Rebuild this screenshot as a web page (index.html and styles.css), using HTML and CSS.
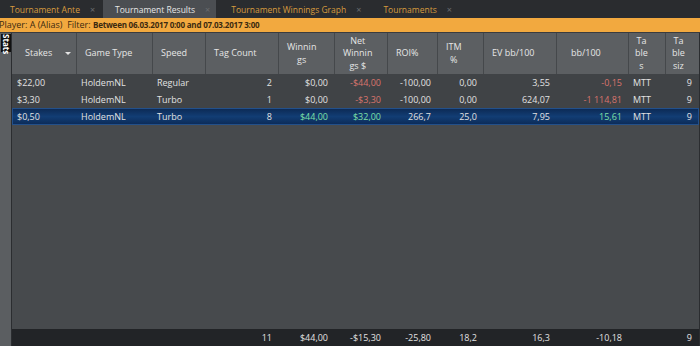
FILE: index.html
```html
<!DOCTYPE html>
<html lang="en">

<head>
    <meta charset="UTF-8">
    <title>Tournament Results</title>
    <link rel="stylesheet" href="styles.css">
</head>

<body>
    <div class="tabs">
        <div class="tab">Tournament Ante <span class="close">×</span></div>
        <div class="tab active">Tournament Results <span class="close">×</span></div>
        <div class="tab">Tournament Winnings Graph <span class="close">×</span></div>
        <div class="tab">Tournaments <span class="close">×</span></div>
    </div>
    <div class="filter">
        Player: A (Alias)&nbsp; Filter: <b>Between 06.03.2017 0:00 and 07.03.2017 3:00</b>
    </div>
    <div class="main">
        <div class="side">
            <div class="side-label">Stats</div>
        </div>
        <div class="grid-wrap">
            <div class="row head">
                <div class="hc stakes"><span>Stakes</span><span class="arrow"></span></div>
                <div class="hc"><span>Game Type</span></div>
                <div class="hc"><span>Speed</span></div>
                <div class="hc"><span>Tag Count</span></div>
                <div class="hc"><span>Winnin<br>gs</span></div>
                <div class="hc"><span>Net<br>Winnin<br>gs $</span></div>
                <div class="hc"><span>ROI%</span></div>
                <div class="hc"><span>ITM<br>%</span></div>
                <div class="hc"><span>EV bb/100</span></div>
                <div class="hc wide"><span>bb/100</span></div>
                <div class="hc small"><span>Ta<br>ble<br>s</span></div>
                <div class="hc small"><span>Ta<br>ble<br>siz</span></div>
            </div>
            <div class="row data">
                <div>$22,00</div>
                <div>HoldemNL</div>
                <div>Regular</div>
                <div class="r">2</div>
                <div class="r">$0,00</div>
                <div class="r neg">-$44,00</div>
                <div class="r">-100,00</div>
                <div class="r">0,00</div>
                <div class="r">3,55</div>
                <div class="r neg">-0,15</div>
                <div>MTT</div>
                <div class="r">9</div>
            </div>
            <div class="row data">
                <div>$3,30</div>
                <div>HoldemNL</div>
                <div>Turbo</div>
                <div class="r">1</div>
                <div class="r">$0,00</div>
                <div class="r neg">-$3,30</div>
                <div class="r">-100,00</div>
                <div class="r">0,00</div>
                <div class="r">624,07</div>
                <div class="r neg">-1 114,81</div>
                <div>MTT</div>
                <div class="r">9</div>
            </div>
            <div class="row data selected">
                <div>$0,50</div>
                <div>HoldemNL</div>
                <div>Turbo</div>
                <div class="r">8</div>
                <div class="r pos">$44,00</div>
                <div class="r pos">$32,00</div>
                <div class="r">266,7</div>
                <div class="r">25,0</div>
                <div class="r">7,95</div>
                <div class="r pos">15,61</div>
                <div>MTT</div>
                <div class="r">9</div>
            </div>
            <div class="fill"></div>
            <div class="row total">
                <div></div>
                <div></div>
                <div></div>
                <div class="r">11</div>
                <div class="r">$44,00</div>
                <div class="r">-$15,30</div>
                <div class="r">-25,80</div>
                <div class="r">18,2</div>
                <div class="r">16,3</div>
                <div class="r">-10,18</div>
                <div></div>
                <div class="r">9</div>
            </div>
        </div>
    </div>
</body>

</html>
```

FILE: styles.css
```css
body {
    margin: 0;
    width: 700px;
    height: 346px;
    overflow: hidden;
    background-color: #2b2d30;
    font-family: "Open Sans", "Noto Sans", sans-serif;
    font-size: 9px;
    color: #e2e2e2;
}

/* tab strip */
.tabs {
    display: flex;
    height: 18px;
    background-color: #2a2c2f;
}

.tab {
    display: flex;
    align-items: center;
    padding: 0 8px 0 10px;
    font-size: 8.5px;
    color: #d79b3e;
    white-space: nowrap;
}

.tab .close {
    margin-left: 10px;
    color: #6a6c6f;
    font-size: 9px;
}

.tab.active {
    background-color: #4b4e52;
    color: #e6e6e6;
    padding: 0 6px 0 12px;
}

.tab:nth-child(3) {
    padding: 0 10px 0 15px;
}

.tab:nth-child(4) {
    padding-left: 12px;
}

/* filter bar */
.filter {
    height: 14px;
    line-height: 14px;
    background-color: #f2a93f;
    color: #3b2a10;
    font-size: 9px;
    margin-left: -1px;
    white-space: nowrap;
    border-bottom: 1px solid #3a3c3f;
}

.filter b {
    font-size: 8px;
    font-weight: 700;
    letter-spacing: -0.2px;
}

.main {
    display: flex;
    height: 313px;
}

.side {
    width: 11px;
    background-color: #5b5e61;
    padding-top: 1px;
    flex-shrink: 0;
}

.side-label {
    width: 10px;
    height: 18px;
    background-color: #111;
    color: #fff;
    font-size: 8px;
    font-weight: 700;
    writing-mode: vertical-rl;
    line-height: 10px;
    text-align: center;
    margin-left: 1px;
}

.grid-wrap {
    display: flex;
    flex-direction: column;
    width: 687px;
    margin-left: 1px;
    background-color: #474a4d;
}

.row {
    display: grid;
    grid-template-columns: 64px 76px 53px 73px 56px 53px 50px 46px 73px 72px 37px 33px;
}

/* header */
.head {
    height: 41px;
    background-color: #5c5f62;
}

.hc {
    display: flex;
    align-items: center;
    padding-left: 8px;
    border-left: 1px solid #45484b;
    color: #e6e6e6;
    line-height: 12.5px;
    overflow: hidden;
    white-space: nowrap;
}

.hc:first-child {
    border-left: none;
}

.hc span {
    text-align: center;
}

.hc.stakes {
    padding-left: 13px;
}

.hc.wide {
    padding-left: 14px;
}

.hc.small {
    padding-left: 6px;
}

.arrow {
    margin-left: 13px;
    width: 0;
    height: 0;
    border-left: 3px solid transparent;
    border-right: 3px solid transparent;
    border-top: 3px solid #e4e4e4;
}

/* data rows */
.data {
    height: 17px;
    line-height: 17px;
    background-color: #404346;
}

.data div,
.total div {
    padding: 0 6px 0 5px;
    white-space: nowrap;
}

.data .r,
.total .r {
    text-align: right;
}

.neg {
    color: #d9746d;
}

.pos {
    color: #7fe0a6;
}

.data.selected {
    background: linear-gradient(#0c2852, #123d74 50%, #0c2a56);
    box-shadow: inset 0 0 0 1px #23508a;
}

.fill {
    flex: 1;
    background-color: #474a4d;
}

.total {
    height: 17px;
    line-height: 17px;
    background-color: #222427;
}
```
